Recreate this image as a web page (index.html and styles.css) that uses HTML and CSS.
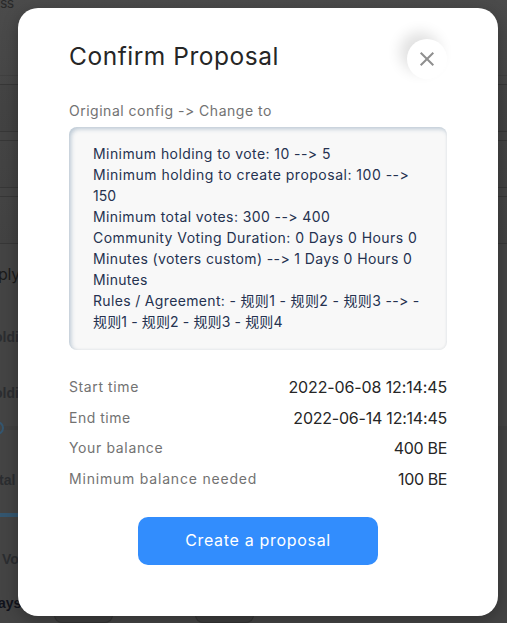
FILE: index.html
```
<!DOCTYPE html>
<html lang="en">
<head>
<meta charset="utf-8">
<title>Confirm Proposal</title>
<link rel="stylesheet" href="styles.css">
</head>
<body>
<div class="page">
  <div class="crumb">ss</div>
  <div class="field"></div>
  <div class="field"></div>
  <div class="field"></div>
  <div class="heading">ply</div>
  <div class="label first">oldi</div>
  <div class="label second">oldi</div>
  <div class="slider"><span class="knob"></span></div>
  <div class="label total">tal</div>
  <div class="bar"></div>
  <div class="label voting">Vo</div>
  <div class="label days">ays</div>
  <div class="pills"><span></span><span></span></div>
</div>
<main class="modal">
  <header class="head">
    <h1><span class="t-title">Confirm Proposal</span></h1>
    <button class="close" aria-label="Close"><svg width="16" height="16" viewBox="0 0 16 16"><path d="M1.7 1.7 14.3 14.3M14.3 1.7 1.7 14.3" fill="none" stroke="#8f8f8f" stroke-width="2"/></svg></button>
  </header>
  <p class="caption"><span class="t-cap">Original config -&gt; Change to</span></p>
  <div class="config">
    <div><span class="l1">Minimum holding to vote: 10 --&gt; 5</span></div>
    <div><span class="l2">Minimum holding to create proposal: 100 --&gt;</span></div>
    <div><span class="l3">150</span></div>
    <div><span class="l4">Minimum total votes: 300 --&gt; 400</span></div>
    <div><span class="l5">Community Voting Duration: 0 Days 0 Hours 0</span></div>
    <div><span class="l6">Minutes (voters custom) --&gt; 1 Days 0 Hours 0</span></div>
    <div><span class="l7">Minutes</span></div>
    <div><span class="l8">Rules / Agreement: - 规则1 - 规则2 - 规则3 --&gt; -</span></div>
    <div><span class="l9">规则1 - 规则2 - 规则3 - 规则4</span></div>
  </div>
  <dl class="facts">
    <div><dt class="f1">Start time</dt><dd class="v1">2022-06-08 12:14:45</dd></div>
    <div><dt class="f2">End time</dt><dd class="v2">2022-06-14 12:14:45</dd></div>
    <div><dt class="f3">Your balance</dt><dd class="v3">400 BE</dd></div>
    <div><dt class="f4">Minimum balance needed</dt><dd class="v4">100 BE</dd></div>
  </dl>
  <button class="submit"><span class="t-btn">Create a proposal</span></button>
</main>
</body>
</html>
```
FILE: styles.css
```
* { box-sizing: border-box; margin: 0; padding: 0; }
body {
  width: 507px; height: 623px; overflow: hidden; position: relative;
  background: #444; font-family: Inter, "Noto Sans CJK SC", sans-serif;
  font-feature-settings: "calt" 0;
}
.page { height: 623px; overflow: hidden; white-space: nowrap; background: linear-gradient(#4b4b4b, #444 20%, #444); }
.crumb { height: 76px; font-size: 14px; line-height: 6px; color: #292929; letter-spacing: -.6px; border-bottom: 1px solid #404040; }
.field { height: 48px; margin-top: 8px; border-top: 1px solid #373737; border-bottom: 1px solid #373737; background: linear-gradient(#444, #424242); }
.heading { height: 60px; line-height: 60px; font-size: 16px; color: #1b1b1b; margin-left: -2px; letter-spacing: -.3px; }
.label { font: bold 14px/20px "Liberation Sans", sans-serif; color: #2b2d30; }
.first { margin-top: 23px; margin-left: -6px; }
.second { margin-top: 36px; margin-left: -6px; }
.slider { height: 14px; margin-top: 18px; background: linear-gradient(#444 5px, #404040 5px, #404040 9px, #444 9px); }
.knob { display: block; width: 14px; height: 14px; margin-left: -10px; border: 2px solid #34566f; border-radius: 50%; background: #444; }
.total { margin-top: 35px; margin-left: -1px; }
.bar { height: 4px; width: 30px; margin-top: 23px; background: #34566f; }
.voting { margin-top: 32px; padding-left: 2px; }
.days { margin-top: 24px; color: #11131c; margin-left: -2px; }
.pills { display: flex; gap: 82px; padding-left: 54px; margin-top: -2px; }
.pills span { width: 59px; height: 12px; border: 1px solid #333; border-top: 0; border-radius: 0 0 8px 8px; background: #3d3d3d; }

.modal {
  position: absolute; left: 18px; top: 8px; width: 480px; height: 608px;
  padding: 31px 51px 51px; background: #fff; border-radius: 20px;
  box-shadow: 0 4px 16px rgba(0,0,0,.28);
}
.head { display: flex; justify-content: space-between; height: 40px; }
h1 { font-size: 24.5px; font-weight: 400; line-height: 34px; color: #262626; white-space: nowrap; letter-spacing: .53px; }
.close {
  width: 40px; height: 40px; border: 0; border-radius: 50%; background: #fff;
  display: flex; align-items: center; justify-content: center;
  box-shadow: -7px -7px 14px rgba(0,0,0,.12);
}
.caption { height: 22px; margin-top: 21px; font-size: 14px; line-height: 22px; color: #727272; white-space: nowrap; letter-spacing: .51px; }
.config {
  height: 223px; margin-top: 5px; padding: 16px 24px; border-radius: 8px;
  background: #f8f8f8; color: #253250; font-size: 14px; line-height: 21px; white-space: nowrap;
  box-shadow: inset 2px 2px 4px rgba(47,91,128,.3), inset -1px -1px 2px rgba(0,0,0,.03);
}
.l1 { letter-spacing: .43px; }
.l2 { letter-spacing: .5px; }
.l4 { letter-spacing: .41px; }
.l5 { letter-spacing: .45px; }
.l6 { letter-spacing: .38px; }
.l7 { letter-spacing: .3px; }
.l8 { letter-spacing: .34px; }
.l9 { letter-spacing: .13px; }
.facts { margin-top: 22px; }
.facts div { display: flex; justify-content: space-between; height: 30.5px; line-height: 30px; white-space: nowrap; }
dt { font-size: 14px; color: #727272; }
dd { font-size: 16px; color: #262626; }
.f1 { letter-spacing: .6px; }
.f2 { letter-spacing: .5px; }
.f3 { letter-spacing: .64px; }
.f4 { letter-spacing: .8px; }
.v1 { letter-spacing: -.13px; }
.v2 { letter-spacing: -.22px; }
.v3 { letter-spacing: -.3px; }
.v4 { letter-spacing: -.4px; }
.submit {
  display: block; width: 240px; height: 48px; margin: 23px auto 0; border: 0; border-radius: 10px;
  background: #328dfd; color: #fff; font: 400 16px/46px Inter, sans-serif; padding-bottom: 2px; letter-spacing: .68px;
}
```
